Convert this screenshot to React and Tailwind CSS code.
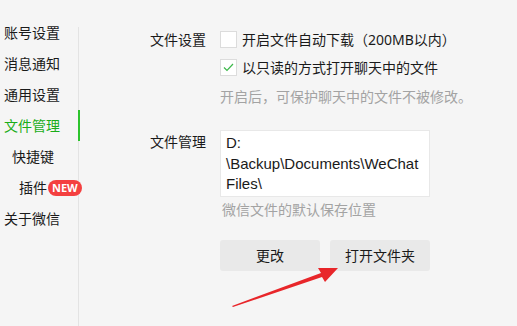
const FONT = { fontFamily: '"Noto Sans", "Noto Sans CJK SC", sans-serif' };
const PATH_FONT = { fontFamily: '"Liberation Sans", "Noto Sans CJK SC", sans-serif' };

function Check({ checked }) {
  return (
    <span className="w-[17px] h-[17px] shrink-0 bg-white border border-[#dcdcdc] flex items-center justify-center">
      {checked && (
        <svg width="11" height="9" viewBox="0 0 11 9">
          <path d="M1 4.5 L4 7.5 L10 1" fill="none" stroke="#3cb84a" strokeWidth="1.2" />
        </svg>
      )}
    </span>
  );
}

const menu = [
  { label: "账号设置", pad: "pl-[4px]" },
  { label: "消息通知", pad: "pl-[4px]" },
  { label: "通用设置", pad: "pl-[4px]" },
  { label: "文件管理", pad: "pl-[4px]", active: true },
  { label: "快捷键", pad: "pl-[12px]" },
  { label: "插件", pad: "pl-[19px]", badge: true },
  { label: "关于微信", pad: "pl-[4px]" },
];

export default function App() {
  return (
    <div className="w-[517px] h-[326px] bg-[#f5f5f5] flex overflow-hidden relative text-[#1a1a1a]" style={FONT}>
      {/* sidebar */}
      <div className="w-[80px] shrink-0 relative pt-[17px]">
        <div className="absolute right-[1px] top-[27px] bottom-0 w-px bg-[#e3e3e3]" />
        {menu.map((m) => (
          <div
            key={m.label}
            className={`relative h-[31px] flex items-center whitespace-nowrap text-[14px] leading-none ${m.pad} ${
              m.active ? "text-[#1aad19]" : ""
            }`}
          >
            {m.label}
            {m.badge && (
              <span className="ml-[1px] h-[16px] px-[4px] rounded-full bg-[#f44040] text-white text-[11px] font-bold flex items-center">
                NEW
              </span>
            )}
            {m.active && <span className="absolute right-0 top-0 bottom-0 w-[2px] bg-[#2dc42d]" />}
          </div>
        ))}
      </div>

      {/* main */}
      <div className="pl-[70px] pt-[31px] text-[14px] leading-none">
        <div className="flex">
          <div className="w-[70px] pt-[2px]">文件设置</div>
          <div className="flex flex-col">
            <div className="flex items-center gap-[5px] h-[17px]">
              <Check />
              <span>开启文件自动下载（200MB以内）</span>
            </div>
            <div className="flex items-center gap-[5px] h-[17px] mt-[11px]">
              <Check checked />
              <span>以只读的方式打开聊天中的文件</span>
            </div>
            <div className="mt-[14px] text-[#a3a3a3]">开启后，可保护聊天中的文件不被修改。</div>
          </div>
        </div>

        <div className="flex mt-[26px]">
          <div className="w-[70px] pt-[5px]">文件管理</div>
          <div className="flex flex-col">
            <div
              className="w-[210px] h-[67px] bg-white border border-[#e8e8e8] px-[5px] pt-[2px] text-[15px] leading-[20.5px] whitespace-nowrap"
              style={PATH_FONT}
            >
              D:<br />\Backup\Documents\WeChat<br />Files\
            </div>
            <div className="mt-[6px] pl-[2px] text-[#a3a3a3]">微信文件的默认保存位置</div>
          </div>
        </div>

        <div className="flex gap-[10px] ml-[70px] mt-[23px]">
          <button className="w-[100px] h-[31px] rounded-[3px] bg-[#e9e9e9] text-[14px]">更改</button>
          <button className="w-[100px] h-[31px] rounded-[3px] bg-[#e9e9e9] text-[14px]">打开文件夹</button>
        </div>
      </div>

      {/* annotation arrow */}
      <svg className="absolute left-0 top-0 pointer-events-none" width="517" height="326">
        <polygon points="232,306 321,273 318,268 338,268 325,282 322,277 233,307" fill="#e8262a" />
      </svg>
    </div>
  );
}
